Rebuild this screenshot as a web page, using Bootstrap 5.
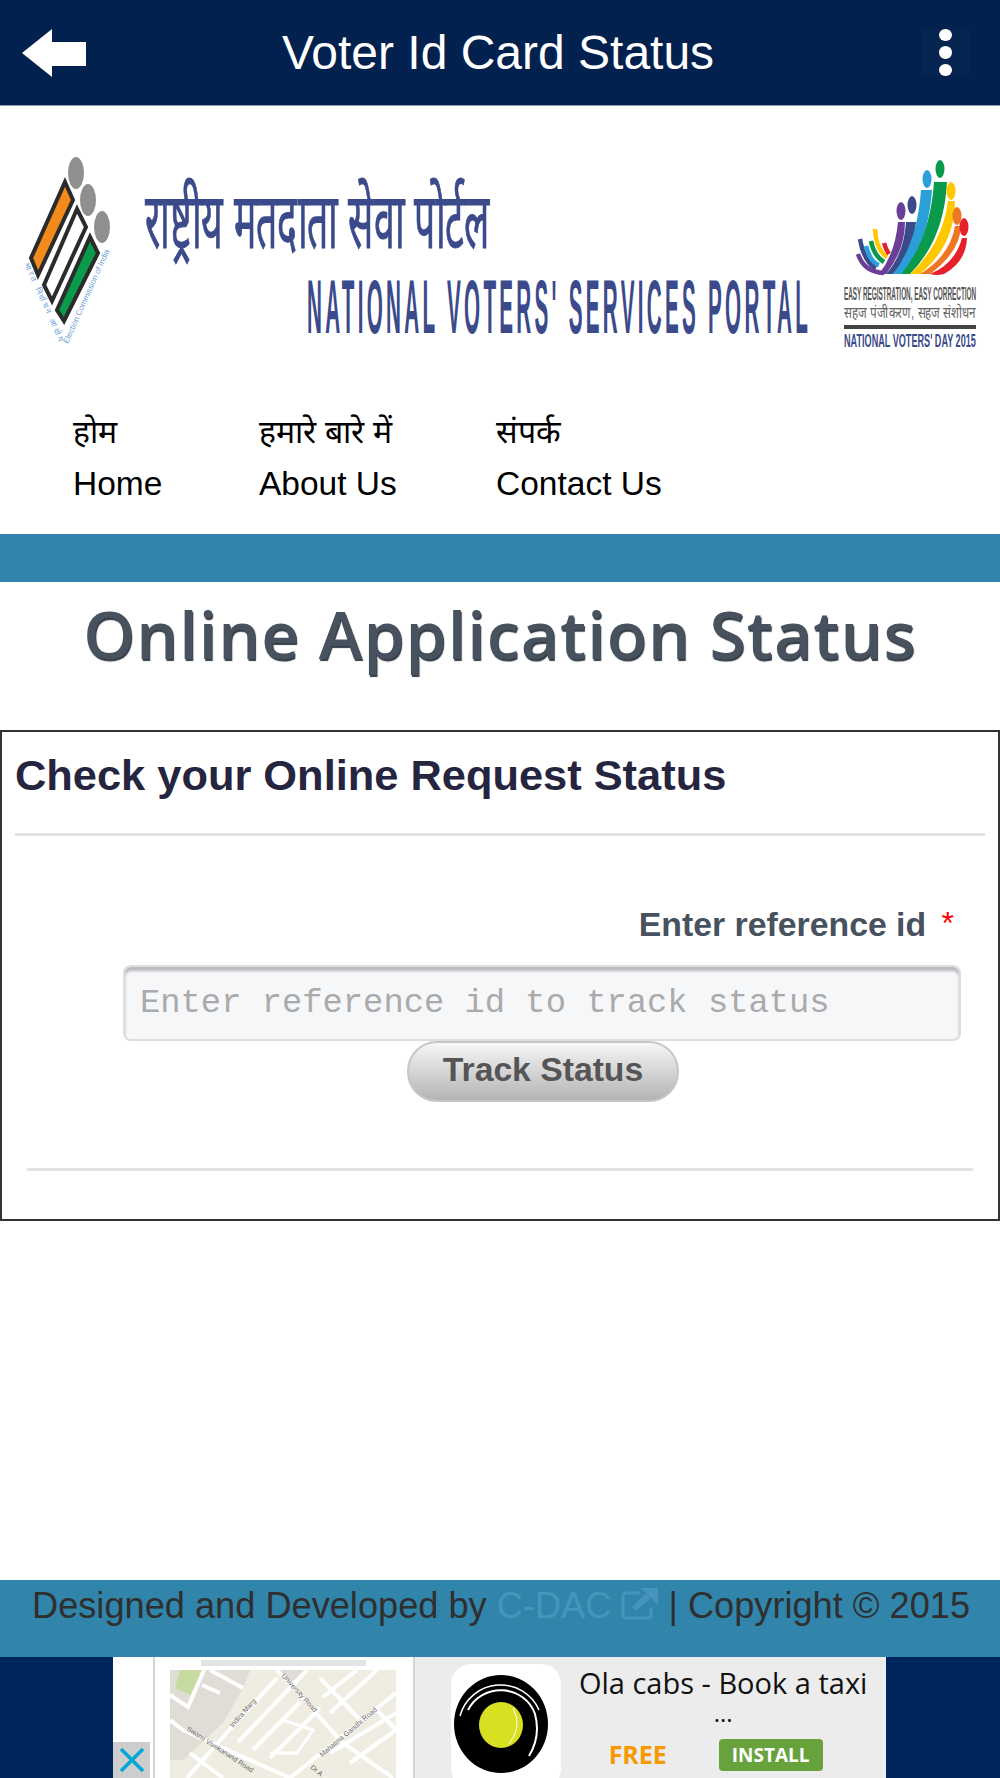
<!DOCTYPE html>
<html lang="en">
<head>
  <meta charset="UTF-8">
  <meta name="viewport" content="width=device-width, initial-scale=1.0">
  <title>Voter Id Card Status</title>
  <link href="https://cdn.jsdelivr.net/npm/bootstrap@5.3.3/dist/css/bootstrap.min.css" rel="stylesheet">
  <style>
    body {
      background: #fff;
      font-family: "Liberation Sans", Arial, sans-serif;
      height: 1778px;
      overflow: hidden;
    }

    .page-wrap { height: 1778px; }

    /* top bar */
    .top-bar { height: 106px; background: #02214f; padding: 0 30px 0 22px; border-bottom: 1px solid #8b97a8; }
    .top-title { color: #fff; font-size: 48px; line-height: 1; margin: 0 14px 0 0; }
    .more-box { width: 48px; height: 47px; background: #05244f; gap: 5px; }
    .more-dot { width: 13px; height: 13px; border-radius: 50%; background: #fff; }

    /* banner */
    .logo-band { height: 242px; padding: 0; }

    /* menu */
    .menu-row { padding-left: 73px; height: 186px; gap: 0; }
    .menu-item { color: #000; text-decoration: none; font-size: 33.5px; line-height: 1; padding-top: 66px; }
    .menu-item:nth-child(1) { width: 186px; }
    .menu-item:nth-child(2) { width: 237px; }
    .menu-hi { display: block; margin-bottom: 17px; font-size: 32px; line-height: 36px; }

    .teal-bar { height: 48px; background: #3185ab; }

    .app-heading {
      height: 148px;
      margin: 0;
      padding-top: 15px;
      text-align: center;
      color: #47525e;
      font-family: "Open Sans", sans-serif;
      font-size: 66px;
      font-weight: 600;
      letter-spacing: 1.1px;
      line-height: 72px;
      text-shadow: 1px 2px 1px #333b44;
    }

    /* status box */
    .status-box { height: 491px; border: 2px solid #333; padding: 17px 13px 0; }
    .status-title { color: #25253f; font-size: 43.4px; font-weight: 700; line-height: 52px; margin: 0 0 32px; }
    .status-line { height: 3px; background: #e2e2e2; }
    .ref-label { color: #47525e; font-size: 33.8px; font-weight: 700; line-height: 40px; margin: 67px 31px 21px 0; text-align: right; }
    .ref-star { color: #f00; font-size: 32px; font-weight: 400; margin-left: 6px; vertical-align: 2px; }
    .ref-input {
      display: block;
      width: 838px;
      height: 76px;
      margin: 0 24px 0 auto;
      padding: 0 15px;
      background: #f6f7f9;
      border: 2px solid #ddd;
      border-radius: 8px;
      box-shadow: inset 0 4px 3px #b9bbbe;
      font-family: "Liberation Mono", monospace;
      font-size: 33.8px;
    }
    .ref-input::placeholder { color: #aaa; opacity: 1; }
    .track-btn {
      width: 272px;
      height: 61px;
      margin-left: 392px;
      padding: 0 0 4px;
      display: block;
      border: 2px solid #c6c6c6;
      border-radius: 30px;
      background: linear-gradient(#f6f6f6, #b4b4b4);
      color: #555;
      font-size: 33.7px;
      font-weight: 700;
    }
    .status-line-low { margin: 66px 12px 0; }

    .blank-space { flex: 1; }

    /* footer */
    .foot-bar { height: 77px; background: #3185ab; color: #2f2f2f; font-size: 36.2px; line-height: 40px; padding: 6px 0 0 32px; white-space: nowrap; }
    .foot-link { color: #4795bc; text-decoration: none; }
    .foot-icon { vertical-align: -2px; }

    /* ad strip */
    .ad-strip { height: 121px; background: #00265e; }
    .ad-inner { width: 773px; margin-left: 113px; background: #fff; overflow: hidden; }
    .ad-close { width: 38px; }
    .ad-x { width: 37px; height: 36px; background: #cdcdcd; }
    .ad-map { width: 244px; border-left: 2px solid #d5d5d5; padding: 0 0 0 15px; margin-left: 2px; }
    .map-top { height: 13px; padding: 3px 0 0 31px; }
    .map-top-bar { width: 165px; height: 6px; background: #e4e4e4; }
    .ad-panel { width: 474px; margin-left: 16px; background: #ececec; border-left: 2px solid #d5d5d5; color: #111; font-family: "Open Sans", sans-serif; }
    .ad-tile { width: 110px; height: 125px; margin: 7px 0 0 36px; background: #fff; border-radius: 20px; flex: none; }
    .ad-copy { width: 325px; text-align: center; }
    .ad-name { font-size: 29px; line-height: 34px; padding-top: 9px; white-space: nowrap; }
    .ad-dots { font-size: 24px; line-height: 20px; margin-top: 3px; }
    .ad-buy { margin: 13px 0 0 48px; }
    .ad-free { width: 110px; color: #f59a00; font-size: 25px; font-weight: 700; text-align: left; }
    .ad-install { width: 104px; height: 32px; background: #68a23c; color: #fff; border-radius: 4px; font-size: 19px; font-weight: 700; line-height: 32px; }
  </style>
</head>
<body>
  <div class="page-wrap d-flex flex-column">

    <!-- Top bar -->
    <div class="top-bar d-flex align-items-center justify-content-between">
      <svg width="66" height="48" viewBox="0 0 66 48"><path d="M0 24 L30 0 V13 H64 V37 H30 V48 Z" fill="#fff"/></svg>
      <h1 class="top-title">Voter Id Card Status</h1>
      <div class="more-box d-flex flex-column align-items-center justify-content-center">
        <span class="more-dot"></span><span class="more-dot"></span><span class="more-dot"></span>
      </div>
    </div>

    <!-- Portal banner -->
    <div class="logo-band">
      <svg width="1000" height="242" viewBox="0 106 1000 242" font-family="'Liberation Sans',sans-serif">
        <!-- election commission mark -->
        <ellipse cx="76" cy="173" rx="8" ry="16" fill="#8f8f8f"/>
        <ellipse cx="88" cy="200" rx="8" ry="16" fill="#8f8f8f"/>
        <ellipse cx="102" cy="227" rx="8" ry="16" fill="#8f8f8f"/>
        <g stroke="#2b2b2b" stroke-width="4">
          <path d="M65 182 L73 200 L38 275 L31 258 Z" fill="#f28a1c"/>
          <path d="M77 209 L86 227 L52 301 L44 285 Z" fill="#fff"/>
          <path d="M90 237 L98 253 L64 321 L57 310 Z" fill="#0a9a4b"/>
        </g>
        <g fill="#6fa0d8" font-size="8">
          <text transform="translate(24 264) rotate(66)" textLength="86">भारत निर्वाचन आयोग</text>
          <text transform="translate(68 344) rotate(-66)" textLength="102">Election Commission of India</text>
        </g>
        <!-- portal name -->
        <text transform="translate(145 248) scale(.556 1)" font-size="78" fill="#3b4a8a" stroke="#3b4a8a" stroke-width="1" textLength="620" lengthAdjust="spacingAndGlyphs">राष्ट्रीय मतदाता सेवा पोर्टल</text>
        <text transform="translate(307 333) scale(.2635 1)" font-size="76" font-weight="700" letter-spacing="12" fill="#3b4a8a" textLength="1913" lengthAdjust="spacingAndGlyphs">NATIONAL VOTERS' SERVICES PORTAL</text>
        <!-- voters day mark -->
        <g fill="none" stroke-width="4.5">
          <path d="M858 254 Q864 272 884 273" stroke="#6b3f98"/>
          <path d="M860 239 Q864 262 876 268" stroke="#3b4a8a"/>
          <path d="M866 246 Q870 262 879 265" stroke="#2b9fd8"/>
          <path d="M871 241 Q874 256 884 262" stroke="#0a9a4b"/>
          <path d="M875 229 Q876 250 887 257" stroke="#ffc800"/>
          <path d="M884 243 Q886 250 889 254" stroke="#e5202a"/>
        </g>
        <path d="M879 274 Q895 254 898 222 L905 222 Q905 250 886 274Z" fill="#6b3f98"/>
        <path d="M886 274 Q904 254 906 222 L916 222 Q914 252 893 274Z" fill="#3b4a8a"/>
        <path d="M893 274 Q917 244 921 190 L932 190 Q928 246 901 274Z" fill="#2b9fd8"/>
        <path d="M901 274 Q930 240 934 182 L947 182 Q944 240 910 274Z" fill="#0a9a4b"/>
        <path d="M910 274 Q942 245 948 201 L955 201 Q955 245 920 274Z" fill="#ffc800"/>
        <path d="M920 274 Q950 256 955 226 L961 226 Q960 252 930 274Z" fill="#ef7622"/>
        <path d="M930 274 Q955 264 962 238 L967 238 Q966 262 944 274 Q936 276 930 274Z" fill="#e5202a"/>
        <ellipse cx="901" cy="211" rx="4.5" ry="9" fill="#6b3f98"/>
        <ellipse cx="912" cy="205" rx="4.5" ry="9" fill="#3b4a8a"/>
        <ellipse cx="927" cy="179" rx="4.5" ry="9" fill="#2b9fd8"/>
        <ellipse cx="940" cy="169" rx="4.5" ry="9" fill="#0a9a4b"/>
        <ellipse cx="951" cy="191" rx="4.5" ry="9" fill="#ffc800"/>
        <ellipse cx="957" cy="216" rx="4.5" ry="9" fill="#ef7622"/>
        <ellipse cx="964" cy="227" rx="4.5" ry="9" fill="#e5202a"/>
        <text transform="translate(844 300) scale(.327 1)" font-size="18" font-weight="700" fill="#555" textLength="404" lengthAdjust="spacingAndGlyphs">EASY REGISTRATION, EASY CORRECTION</text>
        <text transform="translate(844 318) scale(.66 1)" font-size="16" fill="#666" textLength="200" lengthAdjust="spacingAndGlyphs">सहज पंजीकरण, सहज संशोधन</text>
        <rect x="844" y="325" width="132" height="4" fill="#444"/>
        <text transform="translate(844 347) scale(.45 1)" font-size="18" font-weight="700" fill="#3b4a8a" textLength="293" lengthAdjust="spacingAndGlyphs">NATIONAL VOTERS' DAY 2015</text>
      </svg>
    </div>

    <!-- Menu -->
    <div class="menu-row d-flex">
      <a class="menu-item" href="#"><span class="menu-hi">होम</span>Home</a>
      <a class="menu-item" href="#"><span class="menu-hi">हमारे बारे में</span>About Us</a>
      <a class="menu-item" href="#"><span class="menu-hi">संपर्क</span>Contact Us</a>
    </div>

    <div class="teal-bar"></div>

    <h2 class="app-heading">Online Application Status</h2>

    <!-- Request form -->
    <div class="status-box">
      <h3 class="status-title">Check your Online Request Status</h3>
      <div class="status-line"></div>
      <div class="ref-label">Enter reference id <span class="ref-star">*</span></div>
      <input class="ref-input" type="text" placeholder="Enter reference id to track status">
      <button class="track-btn" type="button">Track Status</button>
      <div class="status-line status-line-low"></div>
    </div>

    <div class="blank-space"></div>

    <!-- Footer -->
    <div class="foot-bar">Designed and Developed by <a class="foot-link" href="#">C-DAC <svg class="foot-icon" width="37" height="32" viewBox="0 0 37 32"><path d="M30 20 V27 Q30 30 27 30 H5 Q2 30 2 27 V8 Q2 5 5 5 H19" fill="none" stroke="#4795bc" stroke-width="3"/><path d="M13 21 L27 8" fill="none" stroke="#4795bc" stroke-width="6"/><path d="M20 0 H37 V17 Z" fill="#4795bc"/></svg></a> | Copyright © 2015</div>

    <!-- Ad strip -->
    <div class="ad-strip">
      <div class="ad-inner d-flex h-100">
        <div class="ad-close d-flex align-items-end">
          <div class="ad-x d-flex align-items-center justify-content-center">
            <svg width="24" height="24" viewBox="0 0 24 24" stroke="#00a9d4" stroke-width="3.5"><path d="M1 1 L23 23 M23 1 L1 23"/></svg>
          </div>
        </div>
        <div class="ad-map">
          <div class="map-top"><div class="map-top-bar"></div></div>
          <svg width="226" height="108" viewBox="0 0 226 108" class="d-block">
            <rect width="226" height="108" fill="#efece2"/>
            <path d="M0 0 H80 L73 18 L53 53 L13 90 H0 Z" fill="#e0dcd6"/>
            <path d="M107 0 H137 L125 10 H115 Z" fill="#e0dcd6"/>
            <path d="M10 0 H34 L20 25 L5 18 Z" fill="#c5dba0"/>
            <g stroke="#fff" stroke-width="4" fill="none">
              <path d="M34 0 L18 37 L0 25"/>
              <path d="M40 0 L73 18 M32 15 L50 23"/>
              <path d="M107 8 L53 67 L17 108"/>
              <path d="M137 0 L68 72 M130 32 L83 80 M150 38 L100 88"/>
              <path d="M107 0 L173 73 L223 108"/>
              <path d="M0 50 L13 60 L120 108"/>
              <path d="M226 23 L120 108 M226 43 L160 83 M226 60 L180 93"/>
              <path d="M207 0 L160 43 M187 0 L153 27 M207 40 L226 60 M20 83 L53 108"/>
              <path d="M150 8 L190 50"/>
            </g>
            <path d="M113 50 L143 60 L127 83 L100 83" stroke="#fff" stroke-width="3" fill="none"/>
            <g fill="#666" font-size="7">
              <text transform="translate(111 6) rotate(48)">University Road</text>
              <text transform="translate(63 58) rotate(-49)">Indira Marg</text>
              <text transform="translate(16 60) rotate(33)">Swami Vivekanand Road</text>
              <text transform="translate(152 87) rotate(-40)">Mahatma Gandhi Road</text>
              <text transform="translate(140 98) rotate(40)">Dr A</text>
            </g>
          </svg>
        </div>
        <div class="ad-panel d-flex">
          <div class="ad-tile">
            <svg width="110" height="125" viewBox="0 0 110 125">
              <ellipse cx="50" cy="60" rx="47" ry="49" fill="#000"/>
              <path d="M9 52 A42 42 0 0 1 88 46" fill="none" stroke="#fff" stroke-width="1.5"/>
              <path d="M17 46 A36 34 0 0 1 84 50 Q90 72 78 92" fill="none" stroke="#fff" stroke-width="2"/>
              <ellipse cx="50" cy="61" rx="22" ry="23" fill="#d8e022"/>
              <path d="M62 44 Q72 62 58 80" fill="none" stroke="#fff" stroke-width="1"/>
            </svg>
          </div>
          <div class="ad-copy">
            <div class="ad-name">Ola cabs - Book a taxi</div>
            <div class="ad-dots">...</div>
            <div class="ad-buy d-flex align-items-center">
              <span class="ad-free">FREE</span>
              <span class="ad-install">INSTALL</span>
            </div>
          </div>
        </div>
      </div>
    </div>
  </div>

  <script src="https://cdn.jsdelivr.net/npm/bootstrap@5.3.3/dist/js/bootstrap.bundle.min.js"></script>
</body>
</html>
